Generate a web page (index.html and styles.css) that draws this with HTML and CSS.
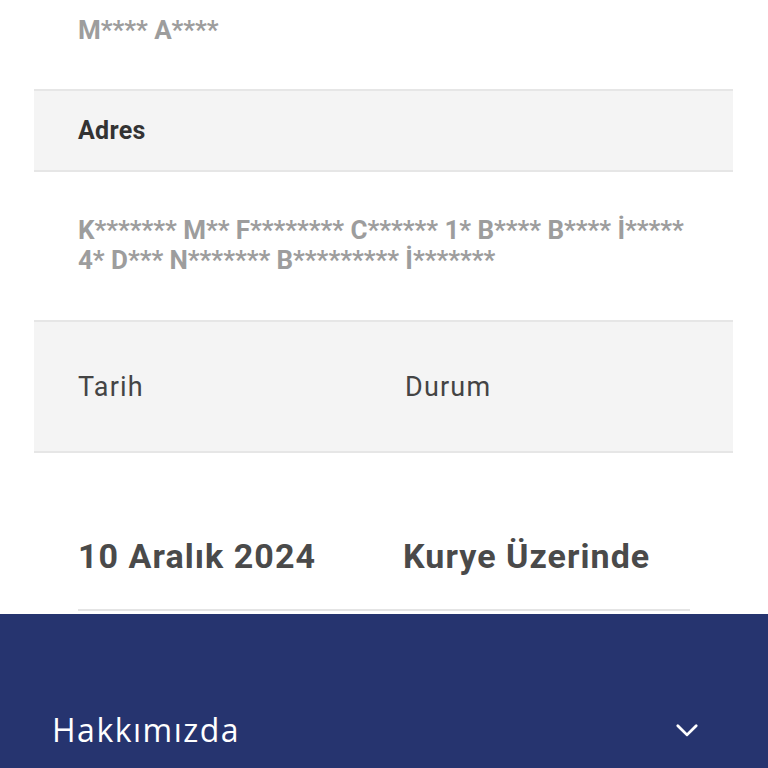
FILE: index.html
```html
<!DOCTYPE html>
<html lang="tr">
<head>
<meta charset="utf-8">
<link rel="stylesheet" href="styles.css">
</head>
<body>
<main class="card">
  <div class="value name">M**** A****</div>
  <div class="label-row"><span class="label">Adres</span></div>
  <div class="value address">K******* M** F******** C****** 1* B**** B**** İ***** 4* D*** N******* B********* İ*******</div>
  <div class="table-head">
    <span class="col col-date">Tarih</span>
    <span class="col">Durum</span>
  </div>
  <div class="table-row">
    <span class="cell cell-date">10 Aralık 2024</span>
    <span class="cell">Kurye Üzerinde</span>
  </div>
</main>
<footer class="footer">
  <div class="accordion">
    <span class="accordion-title">Hakkımızda</span>
    <svg class="chevron" viewBox="0 0 24 24" width="26" height="26" aria-hidden="true"><path d="M3.5 8 L12 16.5 L20.5 8" fill="none" stroke="#fff" stroke-width="2.6" stroke-linecap="round" stroke-linejoin="round"/></svg>
  </div>
</footer>
</body>
</html>
```

FILE: styles.css
```css
html, body {
  margin: 0;
  padding: 0;
  background: #fff;
}
body {
  font-family: Roboto, "Liberation Sans", sans-serif;
  width: 768px;
  height: 768px;
  overflow: hidden;
}
.card {
  margin-left: 34px;
  width: 699px;
}
.value {
  color: #9d9d9d;
  font-weight: 700;
  font-size: 26px;
  letter-spacing: -0.05px;
  padding-left: 44px;
  padding-right: 40px;
}
.name {
  height: 89px;
  line-height: 30px;
  padding-top: 15px;
  box-sizing: border-box;
}
.label-row {
  height: 83px;
  background: #f4f4f4;
  border-top: 2px solid #e6e6e6;
  border-bottom: 2px solid #e6e6e6;
  box-sizing: border-box;
  display: flex;
  align-items: center;
  padding-left: 44px;
}
.label {
  color: #333;
  font-weight: 700;
  font-size: 25px;
  letter-spacing: 0.3px;
}
.address {
  height: 148px;
  box-sizing: border-box;
  padding-top: 43px;
  padding-right: 34px;
  line-height: 30px;
}
.table-head {
  height: 133px;
  background: #f4f4f4;
  border-top: 2px solid #e6e6e6;
  border-bottom: 2px solid #e6e6e6;
  box-sizing: border-box;
  display: flex;
  align-items: center;
  padding-left: 44px;
}
.col {
  color: #444;
  font-size: 27px;
  letter-spacing: 1.2px;
}
.col-date {
  width: 327px;
}
.table-row {
  margin-left: 44px;
  width: 612px;
  height: 158px;
  box-sizing: border-box;
  display: flex;
  align-items: center;
  padding-top: 50px;
  border-bottom: 2px solid #e4e4e4;
}
.cell {
  color: #4a4a4a;
  font-weight: 700;
  font-size: 34px;
  letter-spacing: 1.05px;
}
.cell-date {
  width: 325px;
}
.footer {
  background: #26346f;
  height: 154px;
  margin-top: 3px;
}
.accordion {
  display: flex;
  align-items: center;
  justify-content: space-between;
  padding: 94px 68px 0 52px;
}
.accordion-title {
  color: #fff;
  font-family: "Open Sans", Lato, sans-serif;
  font-size: 32px;
  letter-spacing: 1.5px;
}
.chevron {
  display: block;
}
```
